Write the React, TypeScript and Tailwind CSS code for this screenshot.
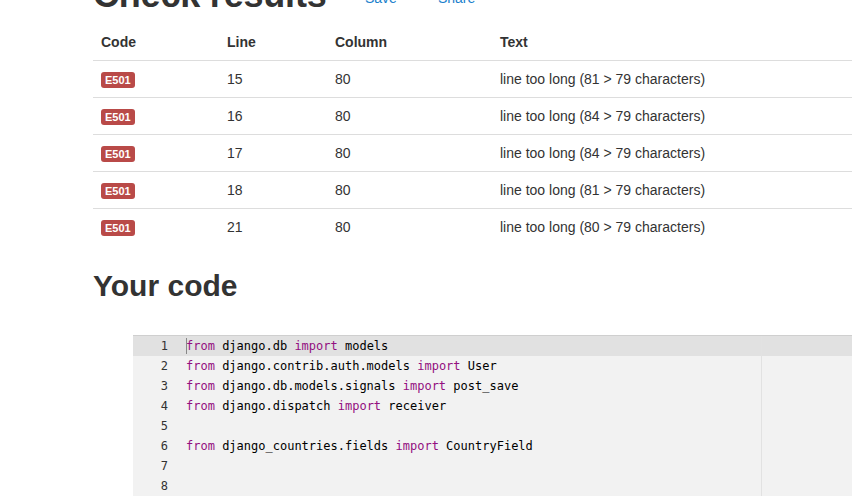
import React from "react";

const results = [
	{ line: 15, col: 80, text: "line too long (81 > 79 characters)" },
	{ line: 16, col: 80, text: "line too long (84 > 79 characters)" },
	{ line: 17, col: 80, text: "line too long (84 > 79 characters)" },
	{ line: 18, col: 80, text: "line too long (81 > 79 characters)" },
	{ line: 21, col: 80, text: "line too long (80 > 79 characters)" },
];

// each line: list of [text, isKeyword]
const code: [string, boolean][][] = [
	[["from", true], [" django.db ", false], ["import", true], [" models", false]],
	[["from", true], [" django.contrib.auth.models ", false], ["import", true], [" User", false]],
	[["from", true], [" django.db.models.signals ", false], ["import", true], [" post_save", false]],
	[["from", true], [" django.dispatch ", false], ["import", true], [" receiver", false]],
	[],
	[["from", true], [" django_countries.fields ", false], ["import", true], [" CountryField", false]],
	[],
	[],
];

const cols = "grid grid-cols-[126px_108px_165px_1fr] items-center";

export default function App() {
	return (
		<div className="h-[497px] w-[852px] overflow-hidden bg-white pl-[93px] text-[#333] font-['Liberation_Sans',Arial,sans-serif]">
			<div className="flex items-baseline mt-[-25px] w-[900px]">
				<h1 className="w-[272px] text-[36px] leading-[40px] font-bold tracking-[-0.2px]">Check results</h1>
				<a className="relative -top-[4px] text-[14px] text-[#1b7fcc]">Save</a>
				<a className="relative -top-[4px] ml-[41px] text-[14px] text-[#1b7fcc]">Share</a>
			</div>

			<div className="mt-[9px] w-[900px] text-[14px]">
				<div className={`${cols} h-[37px] font-bold border-b border-[#dddddd]`}>
					<div className="pl-2">Code</div>
					<div className="pl-2">Line</div>
					<div className="pl-2">Column</div>
					<div className="pl-2">Text</div>
				</div>
				{results.map((r, i) => (
					<div key={i} className={`${cols} ${i > 0 ? "h-[37px] border-t border-[#dddddd]" : "h-[36px]"}`}>
						<div className="pl-2">
							<span className="inline-block rounded-[3px] bg-[#b94a48] px-[4px] text-[11px] leading-[16px] font-bold text-white">
								E501
							</span>
						</div>
						<div className="pl-2">{r.line}</div>
						<div className="pl-2">{r.col}</div>
						<div className="pl-2">{r.text}</div>
					</div>
				))}
			</div>

			<h2 className="mt-[23px] text-[30px] leading-[36px] font-bold">Your code</h2>

			<div className="mt-[31px] ml-[40px] w-[900px] border-t border-[#cfcfcf] bg-[#f2f2f2] font-['DejaVu_Sans_Mono',monospace] text-[12px] text-black">
				{code.map((parts, i) => (
					<div key={i} className={`flex h-[20px] items-center ${i === 0 ? "bg-[#e1e1e1]" : ""}`}>
						<div className="w-[48px] pr-[13px] text-right text-[#333]">{i + 1}</div>
						<div className="relative w-[581px] h-full flex items-center pl-[5px] border-r border-[#e2e2e2] whitespace-pre">
							{i === 0 && <span className="absolute left-[5px] top-[2px] h-[16px] w-px bg-[#888]" />}
							{parts.map(([t, kw], j) => (
								<span key={j} className={kw ? "text-[#930f80]" : ""}>
									{t}
								</span>
							))}
						</div>
						<div className="flex-1" />
					</div>
				))}
			</div>
		</div>
	);
}
